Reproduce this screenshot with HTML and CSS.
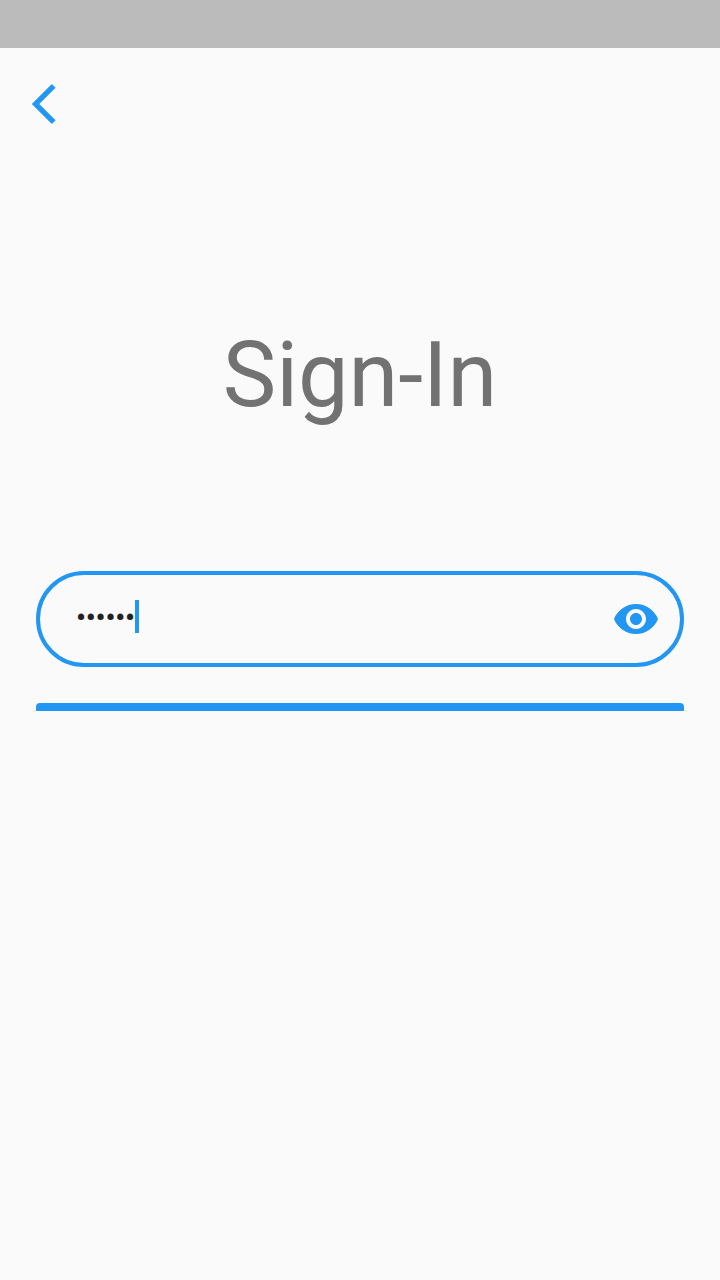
FILE: index.html
```html
<!DOCTYPE html>
<html lang="en">
<head>
<meta charset="utf-8">
<title>Sign-In</title>
<link rel="stylesheet" href="styles.css">
</head>
<body>
<div class="status-bar"></div>
<header class="app-bar">
<button class="back" aria-label="Back"><svg width="48" height="48" viewBox="0 0 24 24"><path d="M11.67 3.87L9.9 2.1 0 12l9.9 9.9 1.77-1.77L3.54 12z"/></svg></button>
</header>
<main class="content">
<h1 class="title">Sign-In</h1>
<div class="field">
<span class="password">••••••</span><span class="caret"></span>
<button class="toggle" aria-label="Show password"><svg width="48" height="48" viewBox="0 0 24 24"><path d="M12 4.5C7 4.5 2.73 7.61 1 12c1.73 4.39 6 7.5 11 7.5s9.27-3.11 11-7.5c-1.73-4.39-6-7.5-11-7.5zM12 17c-2.76 0-5-2.24-5-5s2.24-5 5-5 5 2.24 5 5-2.24 5-5 5zm0-8c-1.66 0-3 1.34-3 3s1.34 3 3 3 3-1.34 3-3-1.34-3-3-3z"/></svg></button>
</div>
<div class="submit"></div>
</main>
</body>
</html>
```
FILE: styles.css
```css
* { box-sizing: border-box; }
body { margin: 0; min-height: 1280px; background: #fafafa; font-family: Roboto, sans-serif; }
button { border: 0; padding: 0; background: none; display: flex; }
svg { fill: #2196f3; display: block; }
.back path { stroke: #2196f3; stroke-width: 0.2; }
.status-bar { height: 48px; background: #bbbbbb; }
.app-bar { height: 112px; display: flex; align-items: center; padding-left: 32px; }
.content { padding: 161px 36px 0; }
.title { margin: 0; height: 250px; font-size: 90px; line-height: 110px; font-weight: 400; text-align: center; color: #727272; }
.field { height: 96px; border: 4px solid #2196f3; border-radius: 48px; display: flex; align-items: center; padding: 0 20px 0 36px; }
.password { width: 59px; font-size: 30px; line-height: 38px; letter-spacing: -0.33px; margin-top: -2px; color: #212121; -webkit-text-stroke: 0.2px #212121; }
.caret { width: 4px; height: 33px; background: #2196f3; margin-top: -6px; }
.toggle { margin-left: auto; }
.submit { margin-top: 36px; height: 8px; border-radius: 4px 4px 0 0; background: #2196f3; }
```
